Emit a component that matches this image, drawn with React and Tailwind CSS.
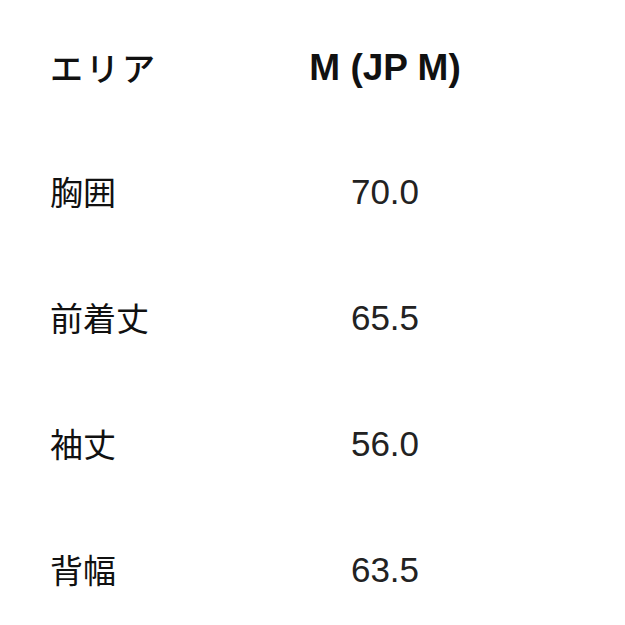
export default function App() {
  const rows = [
    ["胸囲", "70.0"],
    ["前着丈", "65.5"],
    ["袖丈", "56.0"],
    ["背幅", "63.5"],
  ];
  const font = { fontFamily: '"Liberation Sans", "Noto Sans CJK JP", sans-serif' };
  const cjk = { fontFamily: '"Noto Sans CJK JP", sans-serif' };
  return (
    <div className="w-[625px] h-[625px] bg-white pt-[6px] text-[#111]" style={font}>
      <div className="grid grid-cols-[200px_270px] pl-[50px]">
        <div className="h-[123px] flex items-center text-[33px] font-medium tracking-[3px]" style={cjk}>エリア</div>
        <div className="h-[123px] flex items-center justify-center text-[37px] font-bold">M (JP M)</div>
        {rows.map(([a, b]) => (
          <div key={a} className="contents">
            <div className="h-[126px] flex items-center text-[33px]" style={cjk}>{a}</div>
            <div className="h-[126px] flex items-center justify-center text-[35px] text-[#222]">{b}</div>
          </div>
        ))}
      </div>
    </div>
  );
}
